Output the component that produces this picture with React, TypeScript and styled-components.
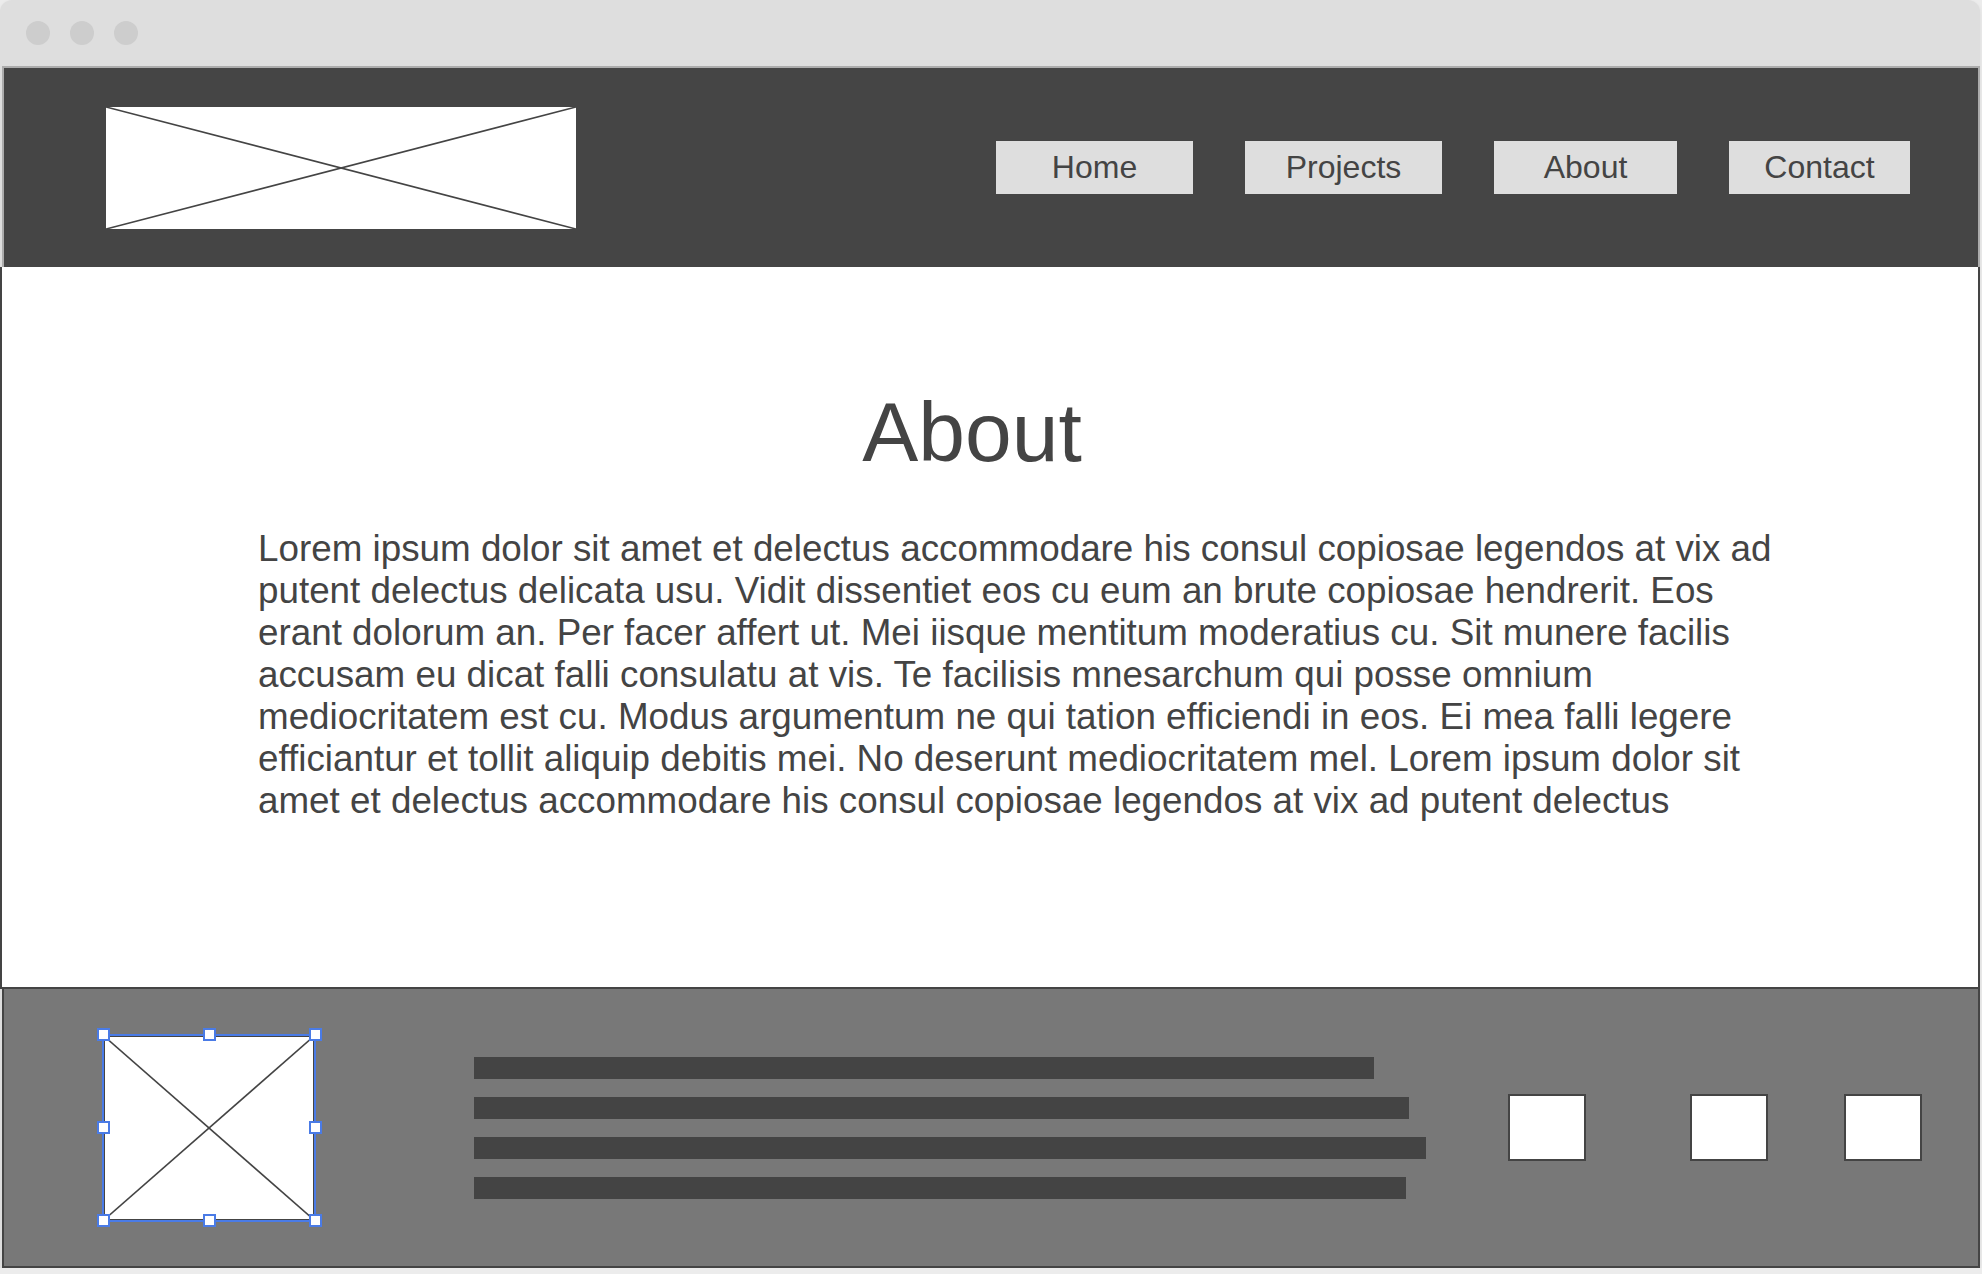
import React from "react"
import styled, { createGlobalStyle } from "styled-components"

const GlobalStyle = createGlobalStyle`
  html, body {
    margin: 0;
    padding: 0;
    background: #ececec;
    font-family: "Liberation Sans", Arial, sans-serif;
  }
`

const Frame = styled.div`
  width: 1980px;
  background: #dedede;
  border-radius: 12px 12px 0 0;
  box-shadow: 0 2px 4px rgba(0, 0, 0, 0.08);
  overflow: hidden;
`

const TitleBar = styled.div`
  height: 66px;
  display: flex;
  align-items: center;
  gap: 20px;
  padding-left: 26px;
`

const Dot = styled.span`
  width: 24px;
  height: 24px;
  border-radius: 50%;
  background: #cdcdcd;
`

const Header = styled.header`
  margin-left: 2px;
  height: 199px;
  background: #454545;
  border: 2px solid #acacac;
  border-bottom: none;
  display: flex;
  align-items: center;
  justify-content: space-between;
  padding: 0 68px 0 102px;
`

const Placeholder = styled.div<{ $w: number; $h: number; $border?: boolean }>`
  width: ${p => p.$w}px;
  height: ${p => p.$h}px;
  background: #fff;
  box-sizing: border-box;
  border: ${p => (p.$border ? "2px solid #444" : "none")};
  svg {
    display: block;
    width: 100%;
    height: 100%;
  }
`

const Nav = styled.nav`
  display: flex;
  gap: 52px;
`

const NavButton = styled.a<{ $w: number }>`
  width: ${p => p.$w}px;
  height: 53px;
  background: #dedede;
  color: #444;
  font-size: 32px;
  display: flex;
  align-items: center;
  justify-content: center;
  text-decoration: none;
`

const Content = styled.main`
  height: 722px;
  box-sizing: border-box;
  background: #fff;
  border: 2px solid #444;
  border-top: none;
  padding-top: 123px;
`

const Title = styled.h1`
  margin: 0;
  font-size: 84px;
  line-height: 84px;
  font-weight: 400;
  color: #444;
  text-align: center;
  padding-right: 36px;
`

const Body = styled.p`
  margin: 54px 0 0 256px;
  width: 1540px;
  font-size: 36.8px;
  line-height: 42px;
  color: #444;
`

const Footer = styled.footer`
  margin-left: 2px;
  height: 277px;
  background: #787878;
  border: 2px solid #444;
  border-top: none;
  display: flex;
  align-items: center;
  padding-left: 99px;
`

const Selected = styled.div`
  position: relative;
`

const SelectionLine = styled.div`
  position: absolute;
  inset: -1px;
  border: 2px solid #4a7be6;
  pointer-events: none;
`

const Handle = styled.span<{ $x: number; $y: number }>`
  position: absolute;
  left: ${p => p.$x * 100}%;
  top: ${p => p.$y * 100}%;
  width: 13px;
  height: 13px;
  margin: -6.5px 0 0 -6.5px;
  box-sizing: border-box;
  background: #fff;
  border: 2px solid #4a7be6;
`

const Lines = styled.div`
  margin-left: 159px;
  display: flex;
  flex-direction: column;
  gap: 18px;
`

const Line = styled.div<{ $w: number }>`
  width: ${p => p.$w}px;
  height: 22px;
  background: #444;
`

const Square = styled.div<{ $ml: number }>`
  margin-left: ${p => p.$ml}px;
  width: 78px;
  height: 67px;
  box-sizing: border-box;
  background: #fff;
  border: 2px solid #444;
`

const Cross = () => (
  <svg viewBox="0 0 100 100" preserveAspectRatio="none">
    <line x1="0" y1="0" x2="100" y2="100" stroke="#444" strokeWidth="1.6" vectorEffect="non-scaling-stroke" />
    <line x1="100" y1="0" x2="0" y2="100" stroke="#444" strokeWidth="1.6" vectorEffect="non-scaling-stroke" />
  </svg>
)

const navItems = [
  { label: "Home", w: 197 },
  { label: "Projects", w: 197 },
  { label: "About", w: 183 },
  { label: "Contact", w: 181 },
]

const handles = [
  [0, 0], [0.5, 0], [1, 0],
  [0, 0.5], [1, 0.5],
  [0, 1], [0.5, 1], [1, 1],
]

const text =
  "Lorem ipsum dolor sit amet et delectus accommodare his consul copiosae legendos at vix ad putent delectus delicata usu. Vidit dissentiet eos cu eum an brute copiosae hendrerit. Eos erant dolorum an. Per facer affert ut. Mei iisque mentitum moderatius cu. Sit munere facilis accusam eu dicat falli consulatu at vis. Te facilisis mnesarchum qui posse omnium mediocritatem est cu. Modus argumentum ne qui tation efficiendi in eos. Ei mea falli legere efficiantur et tollit aliquip debitis mei. No deserunt mediocritatem mel. Lorem ipsum dolor sit amet et delectus accommodare his consul copiosae legendos at vix ad putent delectus"

export default function App() {
  return (
    <>
      <GlobalStyle />
      <Frame>
        <TitleBar>
          <Dot />
          <Dot />
          <Dot />
        </TitleBar>
        <Header>
          <Placeholder $w={470} $h={122}>
            <Cross />
          </Placeholder>
          <Nav>
            {navItems.map(item => (
              <NavButton key={item.label} $w={item.w}>
                {item.label}
              </NavButton>
            ))}
          </Nav>
        </Header>
        <Content>
          <Title>About</Title>
          <Body>{text}</Body>
        </Content>
        <Footer>
          <Selected>
            <Placeholder $w={212} $h={186} $border>
              <Cross />
            </Placeholder>
            <SelectionLine />
            {handles.map(([x, y]) => (
              <Handle key={`${x}-${y}`} $x={x} $y={y} />
            ))}
          </Selected>
          <Lines>
            <Line $w={900} />
            <Line $w={935} />
            <Line $w={952} />
            <Line $w={932} />
          </Lines>
          <Square $ml={82} />
          <Square $ml={104} />
          <Square $ml={76} />
        </Footer>
      </Frame>
    </>
  )
}
